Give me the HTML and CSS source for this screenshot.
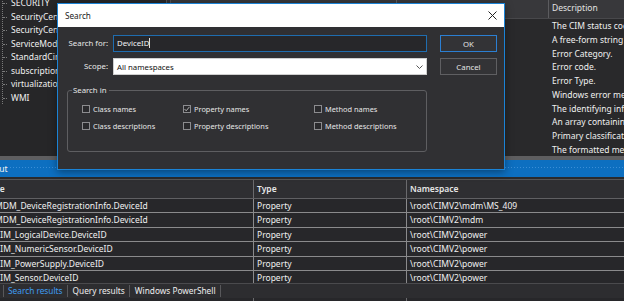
FILE: index.html
```html
<!DOCTYPE html>
<html lang="en">
<head>
    <meta charset="UTF-8">
    <title>WMI Explorer - Search</title>
    <link rel="stylesheet" href="styles.css">
</head>
<body>
    <div class="app">
        <div class="upper">
            <div class="tree">
                <ul class="tree-list">
                    <li>SECURITY</li>
                    <li>SecurityCenter</li>
                    <li>SecurityCenter2</li>
                    <li>ServiceModel</li>
                    <li>StandardCimv2</li>
                    <li>subscription</li>
                    <li>virtualization</li>
                    <li>WMI</li>
                </ul>
            </div>
            <div class="splitter"></div>
            <div class="props">
                <div class="props-head">
                    <div class="col-name">Name</div>
                    <div class="col-type">Origin</div>
                    <div class="col-desc">Description</div>
                </div>
                <div class="props-row"><div class="col-name"></div><div class="col-type"></div><div class="col-desc">The CIM status code that characterizes this instance.</div></div>
                <div class="props-row"><div class="col-name"></div><div class="col-type"></div><div class="col-desc">A free-form string describing the error.</div></div>
                <div class="props-row"><div class="col-name"></div><div class="col-type"></div><div class="col-desc">Error Category.</div></div>
                <div class="props-row"><div class="col-name"></div><div class="col-type"></div><div class="col-desc">Error code.</div></div>
                <div class="props-row"><div class="col-name"></div><div class="col-type"></div><div class="col-desc">Error Type.</div></div>
                <div class="props-row"><div class="col-name"></div><div class="col-type"></div><div class="col-desc">Windows error message.</div></div>
                <div class="props-row"><div class="col-name"></div><div class="col-type"></div><div class="col-desc">The identifying information of the entity.</div></div>
                <div class="props-row"><div class="col-name"></div><div class="col-type"></div><div class="col-desc">An array containing the dynamic content.</div></div>
                <div class="props-row"><div class="col-name"></div><div class="col-type"></div><div class="col-desc">Primary classification of the error.</div></div>
                <div class="props-row"><div class="col-name"></div><div class="col-type"></div><div class="col-desc">The formatted message text.</div></div>
            </div>
        </div>

        <div class="hsplit"></div>

        <div class="panel-title"><span class="panel-name">Output</span></div>

        <div class="results">
            <div class="res-head">
                <div class="c1"><span class="head-name">Name</span></div>
                <div class="c2">Type</div>
                <div class="c3">Namespace</div>
            </div>
            <div class="res-row"><div class="c1"><span class="cell-name">MDM_DeviceRegistrationInfo.DeviceId</span></div><div class="c2">Property</div><div class="c3">\root\CIMV2\mdm\MS_409</div></div>
            <div class="res-row"><div class="c1"><span class="cell-name">MDM_DeviceRegistrationInfo.DeviceId</span></div><div class="c2">Property</div><div class="c3">\root\CIMV2\mdm</div></div>
            <div class="res-row"><div class="c1"><span class="cell-name">CIM_LogicalDevice.DeviceID</span></div><div class="c2">Property</div><div class="c3">\root\CIMV2\power</div></div>
            <div class="res-row"><div class="c1"><span class="cell-name">CIM_NumericSensor.DeviceID</span></div><div class="c2">Property</div><div class="c3">\root\CIMV2\power</div></div>
            <div class="res-row"><div class="c1"><span class="cell-name">CIM_PowerSupply.DeviceID</span></div><div class="c2">Property</div><div class="c3">\root\CIMV2\power</div></div>
            <div class="res-row"><div class="c1"><span class="cell-name">CIM_Sensor.DeviceID</span></div><div class="c2">Property</div><div class="c3">\root\CIMV2\power</div></div>
            <div class="res-row"><div class="c1"><span class="cell-name">CIM_TemperatureSensor.DeviceID</span></div><div class="c2">Property</div><div class="c3">\root\CIMV2\power</div></div>
        </div>

        <div class="tabs">
            <div class="tab active">Search results</div>
            <div class="tab">Query results</div>
            <div class="tab">Windows PowerShell</div>
        </div>
        <div class="tail">
            <div class="c1"></div>
            <div class="c2"></div>
            <div class="c3"></div>
        </div>
    </div>

    <!-- modal search dialog sits over the main window -->
    <div class="dialog">
        <div class="dialog-title">
            <span>Search</span>
            <svg class="close-icon" width="9" height="9" viewBox="0 0 9 9">
                <path d="M0.5 0.5 L8.5 8.5 M8.5 0.5 L0.5 8.5" stroke="#222" stroke-width="1" fill="none"/>
            </svg>
        </div>
        <div class="dialog-body">
            <div class="form-grid">
                <label class="field-label">Search for:</label>
                <div class="text-input">DeviceID<span class="caret"></span></div>
                <button class="btn btn-default">OK</button>

                <label class="field-label">Scope:</label>
                <div class="select-input">
                    <span>All namespaces</span>
                    <svg width="7" height="4" viewBox="0 0 7 4">
                        <path d="M0.5 0.5 L3.5 3.5 L6.5 0.5" stroke="#555" stroke-width="1" fill="none"/>
                    </svg>
                </div>
                <button class="btn">Cancel</button>
            </div>

            <fieldset class="search-in">
                <legend>Search in</legend>
                <div class="check-grid">
                    <div class="check"><span class="box"></span>Class names</div>
                    <div class="check"><span class="box checked"><svg width="6" height="6" viewBox="0 0 6 6"><path d="M0.5 3 L2.2 4.8 L5.5 0.8" stroke="#b0b0b0" stroke-width="1" fill="none"/></svg></span>Property names</div>
                    <div class="check"><span class="box"></span>Method names</div>
                    <div class="check"><span class="box"></span>Class descriptions</div>
                    <div class="check"><span class="box"></span>Property descriptions</div>
                    <div class="check"><span class="box"></span>Method descriptions</div>
                </div>
            </fieldset>
        </div>
    </div>
</body>
</html>
```

FILE: styles.css
```css
body {
    margin: 0;
    padding: 0;
    overflow: hidden;
    background: #2a2a2c;
    font-family: "Noto Sans", "Open Sans", sans-serif;
    font-size: 8.5px;
    color: #f0f0f0;
}

.app {
    width: 624px;
    height: 301px;
    display: flex;
    flex-direction: column;
    overflow: hidden;
}

/* top area: namespace tree + property list */
.upper {
    height: 156px;
    display: flex;
    overflow: hidden;
}

.tree {
    width: 166px;
    background: #262628;
    overflow: hidden;
}

.tree-list {
    list-style: none;
    margin: -4px 0 0 2px;
    padding: 0 0 0 8px;
    border-left: 1px dotted #7a7a7a;
    width: 150px;
}

.tree-list li {
    position: relative;
    height: 13.5px;
    line-height: 13.5px;
    white-space: nowrap;
}

.tree-list li::before {
    content: "";
    position: absolute;
    left: -8px;
    top: 7px;
    width: 4px;
    border-top: 1px dotted #7a7a7a;
}

.splitter {
    width: 3px;
    border-left: 1px solid #505052;
    border-right: 1px solid #505052;
    background: #2d2d30;
}

.props {
    flex: 1;
    background: #29292b;
    overflow: hidden;
}

.props-head,
.props-row {
    display: flex;
    white-space: nowrap;
}

.props-head {
    height: 18px;
    line-height: 16px;
    background: #38383b;
    border-bottom: 1px solid #48484b;
    color: #e2e2e2;
}

.props-row {
    height: 13.75px;
    line-height: 13.75px;
}

.col-name {
    width: 226px;
}

.col-type {
    width: 152px;
}

.col-desc {
    flex: 1;
    padding-left: 3px;
    overflow: hidden;
}

.props-head .col-name,
.props-head .col-type {
    border-right: 1px solid #5c5c5f;
    box-sizing: border-box;
}

.hsplit {
    height: 4px;
    background: #5e5e60;
}

.panel-title {
    height: 17px;
    line-height: 17px;
    background-color: #0d6fc0;
    background-image: radial-gradient(circle, #3a8ed6 0.6px, transparent 0.8px);
    background-size: 3px 3px;
    background-position: 0 6px;
    background-repeat: repeat-x;
    overflow: hidden;
    white-space: nowrap;
}

.panel-name {
    display: inline-block;
    margin-left: -21px;
    padding-right: 2px;
    background: #0d6fc0;
    color: #f4f4f4;
}

/* results grid */
.results {
    margin-top: 2px;
    border-top: 1px solid #555557;
    height: 103px;
    overflow: hidden;
    background: #27272a;
}

.res-head,
.res-row,
.tail {
    display: flex;
    white-space: nowrap;
}

.res-head {
    height: 18px;
    line-height: 18px;
    background: #2f2f32;
    color: #e6e6e6;
    font-weight: 600;
    border-bottom: 1px solid #606063;
}

.res-row {
    height: 14.4px;
    line-height: 13.4px;
    border-bottom: 1px solid #8a8a8c;
    box-sizing: border-box;
}

.c1 {
    width: 253px;
    overflow: hidden;
    border-right: 1px solid #8a8a8c;
}

.c2 {
    width: 149px;
    padding-left: 3px;
    border-right: 1px solid #8a8a8c;
}

.c3 {
    flex: 1;
    padding-left: 3px;
}

.res-head .c1,
.res-head .c2 {
    border-right-color: #6a6a6d;
}

.head-name {
    margin-left: -20px;
}

.cell-name {
    margin-left: -5px;
}

.tabs {
    height: 14px;
    display: flex;
    align-items: center;
    padding-left: 3px;
    background: #2d2d30;
    border-top: 1px solid #4a4a4d;
    white-space: nowrap;
    font-size: 8.3px;
}

.tab {
    height: 12px;
    line-height: 12px;
    padding: 0 4px 0 5px;
    border-right: 1px solid #58585b;
    color: #eeeeee;
}

.tab.active {
    padding-left: 4px;
    color: #3e9cf0;
    border-left: 1px solid #58585b;
}

.tail {
    flex: 1;
    background: #27272a;
}

.tail .c2,
.tail .c1 {
    border-right-color: #6a6a6d;
}

/* search dialog */
.dialog {
    position: absolute;
    left: 57px;
    top: 3px;
    width: 446px;
    height: 165px;
    border: 1px solid #1b83d6;
    background: #303033;
    box-shadow: 0 2px 8px rgba(0, 0, 0, 0.4);
    font-size: 7.8px;
}

.dialog-title {
    height: 23px;
    background: #ffffff;
    color: #1a1a1a;
    font-size: 8.2px;
    display: flex;
    align-items: center;
    justify-content: space-between;
    padding: 0 7px 0 7px;
}

.dialog-body {
    padding-top: 8px;
}

.form-grid {
    display: grid;
    grid-template-columns: 50px 314px 57px;
    grid-auto-rows: 17px;
    column-gap: 5px;
    row-gap: 6px;
}

.form-grid .btn {
    margin-left: 8px;
}

.field-label {
    text-align: right;
    line-height: 17px;
    color: #e8e8e8;
}

.text-input {
    border: 1px solid #1f6db0;
    background: #27272a;
    padding-left: 3px;
    line-height: 15px;
    color: #f2f2f2;
}

.caret {
    display: inline-block;
    width: 0;
    height: 10px;
    border-left: 1px solid #e0e0e0;
    vertical-align: -2px;
}

.select-input {
    background: #ffffff;
    border: 1px solid #cfcfcf;
    padding: 0 3px 0 3px;
    color: #111;
    display: flex;
    align-items: center;
    justify-content: space-between;
}

.btn {
    width: 57px;
    height: 17px;
    padding: 0;
    background: #333336;
    border: 1px solid #5f5f62;
    color: #e4e4e4;
    font-family: inherit;
    font-size: 7.8px;
}

.btn-default {
    border-color: #2b7fd3;
}

.search-in {
    margin: 9px 0 0 9px;
    width: 360px;
    height: 68px;
    box-sizing: border-box;
    padding: 4px 0 0 4px;
    border: 1px solid #5e5e61;
    border-radius: 3px;
}

.search-in legend {
    padding: 0 2px 0 1px;
    line-height: 12px;
    color: #e6e6e6;
}

.check-grid {
    margin-left: 10px;
    display: grid;
    grid-template-columns: 101px 131px 100px;
    grid-auto-rows: 17px;
    font-size: 7.4px;
}

.check {
    display: flex;
    align-items: center;
    white-space: nowrap;
    color: #e6e6e6;
}

.box {
    width: 6px;
    height: 6px;
    border: 1px solid #8c8c8f;
    background: #2a2a2d;
    margin-right: 3px;
    display: flex;
    align-items: center;
    justify-content: center;
}
```
